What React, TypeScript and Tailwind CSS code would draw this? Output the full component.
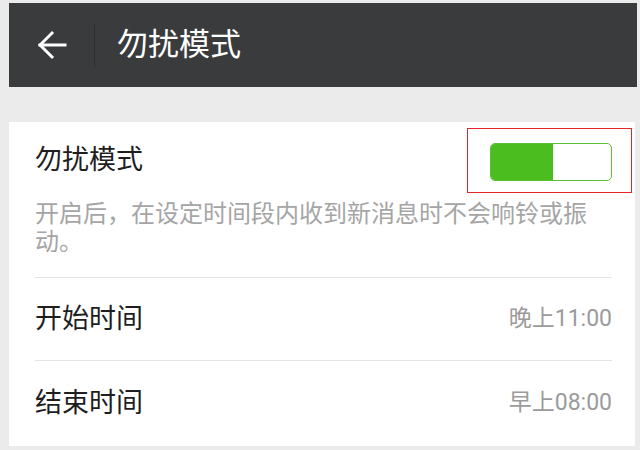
import React, { useState } from "react";

const font = { fontFamily: 'Roboto, "Noto Sans CJK SC", sans-serif' };

function Toggle({ on, onChange }: { on: boolean; onChange: (v: boolean) => void }) {
  return (
    <button
      onClick={() => onChange(!on)}
      className="relative mt-[4px] flex h-[38px] w-[122px] overflow-visible rounded-[5px] border border-[#5cbf35] bg-white"
    >
      <span className={`h-full w-[62px] rounded-l-[4px] ${on ? "bg-[#4bbd1e]" : "bg-white"}`} />
      {/* red highlight box */}
      <span className="pointer-events-none absolute -left-[24px] -right-[21px] -top-[16px] -bottom-[13px] border border-[#e3262a]" />
    </button>
  );
}

function TimeRow({ label, value, last }: { label: string; value: string; last?: boolean }) {
  return (
    <div className={`flex items-center justify-between ${last ? "h-[85px]" : "h-[83px] border-b border-[#e4e4e4]"}`}>
      <span className="text-[27px] text-[#1e1e1e]">{label}</span>
      <span className="text-[23px] text-[#9b9b9b]">{value}</span>
    </div>
  );
}

export default function App() {
  const [on, setOn] = useState(true);

  return (
    <div className="h-[450px] w-[640px] overflow-hidden bg-[#ebebeb] pl-[9px] pr-[3px] pt-[3px]" style={font}>
      {/* ── Header ─────────────────────────────────────── */}
      <div className="flex h-[84px] items-center bg-[#3a3b3d]">
        <svg width="30" height="30" viewBox="0 0 30 30" className="ml-[29px]" fill="none" stroke="white" strokeWidth="3" strokeLinecap="square">
          <path d="M2 15 H27" />
          <path d="M14 3 L2 15 L14 27" strokeLinejoin="miter" />
        </svg>
        <div className="ml-[26px] h-[44px] w-[1px] bg-[#2c2d2f]" />
        <span className="ml-[22px] text-[31px] text-white">勿扰模式</span>
      </div>

      {/* ── Settings card ──────────────────────────────── */}
      <div className="mr-[2px] mt-[35px] bg-white pl-[26px] pr-[23px]">
        <div className="border-b border-[#e4e4e4] pb-[21px] pt-[22px]">
          <div className="flex h-[32px] items-center justify-between">
            <span className="text-[27px] leading-[32px] text-[#1e1e1e]">勿扰模式</span>
            <Toggle on={on} onChange={setOn} />
          </div>
          <p className="mt-[24px] w-[566px] text-[24px] leading-[28px] text-[#a5a5a5]">
            开启后，在设定时间段内收到新消息时不会响铃或振动。
          </p>
        </div>
        <TimeRow label="开始时间" value="晚上11:00" />
        <TimeRow label="结束时间" value="早上08:00" last />
      </div>
    </div>
  );
}
